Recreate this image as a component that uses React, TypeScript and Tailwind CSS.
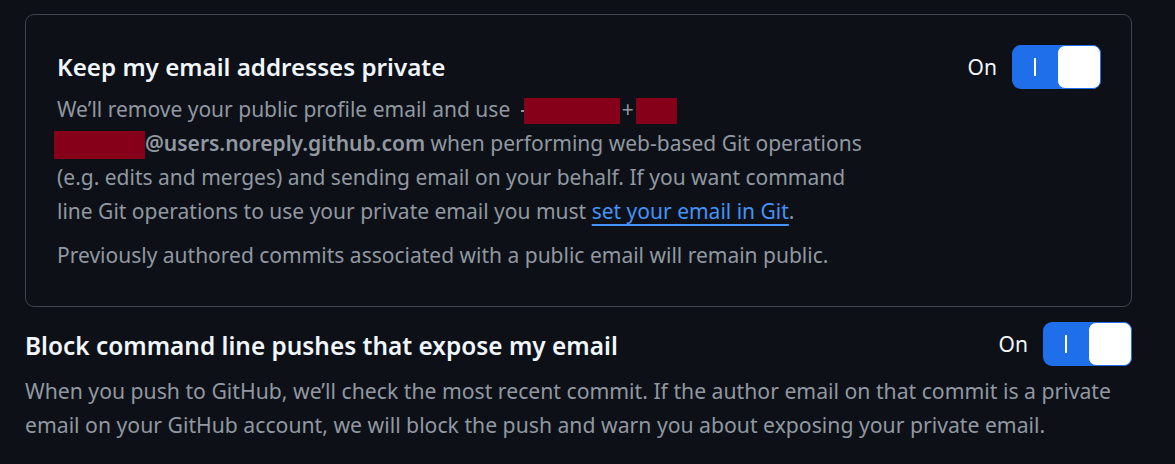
function Toggle() {
  return (
    <div className="flex shrink-0 items-center gap-[15px]">
      <span className="text-[21px] leading-none text-[#f0f6fc]">On</span>
      <div className="flex h-[44px] w-[89px] items-stretch rounded-[9px] bg-[#1f6feb]">
        <div className="flex flex-1 items-center justify-center">
          <div className="h-[18px] w-[2px] bg-white" />
        </div>
        <div className="w-[44px] rounded-[8px] border border-[#1f6feb] bg-white" />
      </div>
    </div>
  );
}

function Redact({ w, h }: { w: string; h: string }) {
  return <span className={`inline-block align-middle bg-[#86001a] ${w} ${h}`} />;
}

export default function App() {
  return (
    <div
      className="min-h-[464px] w-[1175px] bg-[#0d1117] pt-[14px] text-[#9198a1]"
      style={{ fontFamily: "'Noto Sans', sans-serif" }}
    >
      <div className="ml-[25px] flex w-[1107px] rounded-[9px] border border-[#3d444d] pb-[34px] pl-[31px] pr-[30px] pt-[36px]">
        <div className="min-w-0 flex-1">
          <h2 className="text-[24.2px] font-semibold leading-[32px] text-[#f0f6fc]">
            Keep my email addresses private
          </h2>
          <p className="mt-[9px] whitespace-nowrap text-[21px] leading-[34px]">
            We’ll remove your public profile email and use{" "}
            <span className="ml-[5px] inline-block h-[2px] w-[3px] bg-[#9198a1] align-middle" />
            <Redact w="w-[96px]" h="h-[26px]" />
            <span className="mx-[2px]">+</span>
            <Redact w="w-[41px]" h="h-[26px]" />
            <br />
            <span className="-ml-[3px]">
              <Redact w="w-[91px]" h="h-[28px]" />
            </span>
            <strong className="font-semibold">@users.noreply.github.com</strong> when performing web-based Git operations
            <br />
            (e.g. edits and merges) and sending email on your behalf. If you want command
            <br />
            line Git operations to use your private email you must{" "}
            <a className="text-[#4493f8] underline underline-offset-[5px]">set your email in Git</a>.
          </p>
          <p className="mt-[10px] text-[21px] leading-[34px]">
            Previously authored commits associated with a public email will remain public.
          </p>
        </div>
        <div className="-mt-[6px]">
          <Toggle />
        </div>
      </div>

      <div className="ml-[25px] mt-[15px] flex w-[1107px] items-start">
        <div className="min-w-0 flex-1">
          <h2 className="pt-[8px] text-[24.4px] font-semibold leading-[32px] text-[#f0f6fc]">
            Block command line pushes that expose my email
          </h2>
          <p className="mt-[12px] whitespace-nowrap text-[21.2px] leading-[34px]">
            When you push to GitHub, we’ll check the most recent commit. If the author email on that commit is a private
            <br />
            email on your GitHub account, we will block the push and warn you about exposing your private email.
          </p>
        </div>
        <Toggle />
      </div>
    </div>
  );
}
